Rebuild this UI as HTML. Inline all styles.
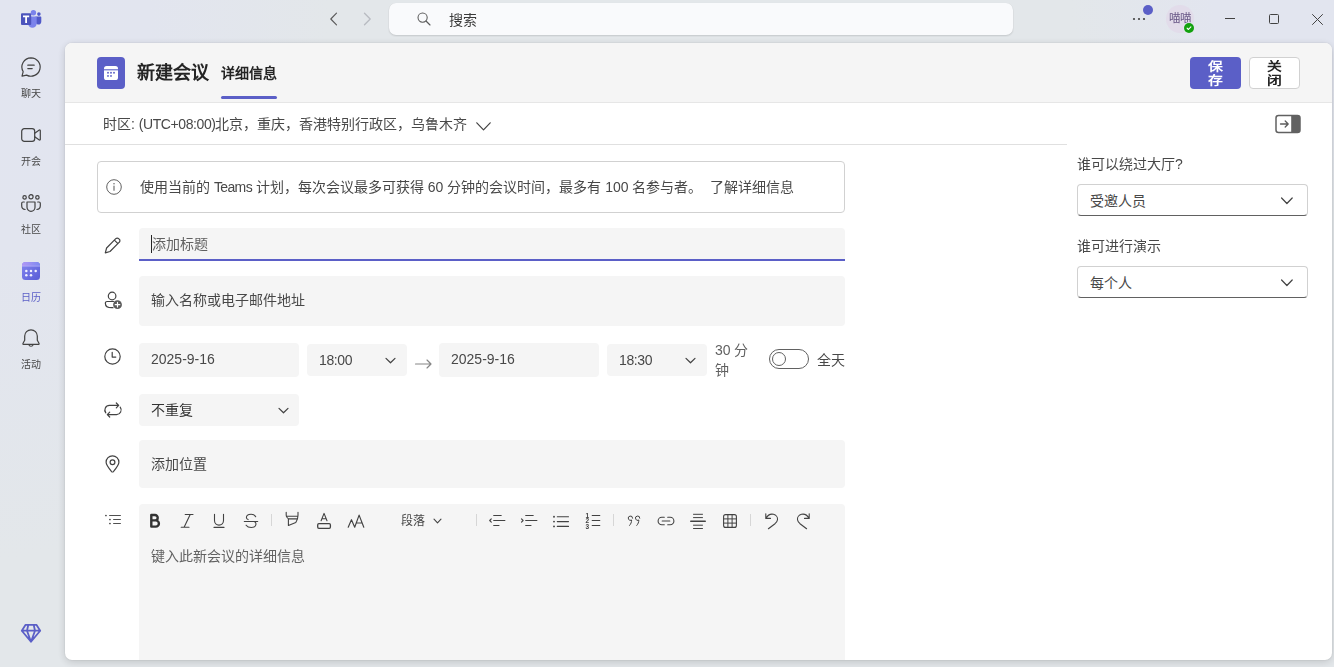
<!DOCTYPE html>
<html lang="zh-CN">
<head>
<meta charset="utf-8">
<title>新建会议</title>
<style>
*{box-sizing:border-box;margin:0;padding:0}
html,body{width:1334px;height:667px;overflow:hidden}
body{background:radial-gradient(ellipse 330px 560px at 0 0,#e2e5f0 0%,#e2e5ef 45%,rgba(226,229,239,0) 100%),radial-gradient(ellipse 240px 220px at 1310px 0,#e2e5ef 0%,#e2e5ef 40%,rgba(226,229,239,0) 100%),#e3e7ea;font-family:"Liberation Sans",sans-serif;font-size:14px;color:#484848;position:relative}
.abs{position:absolute}
.t{position:absolute;white-space:nowrap;line-height:20px;height:20px;text-align:justify;text-align-last:justify}
svg{position:absolute;overflow:visible}
.ic{fill:none;stroke:#424242;stroke-width:1.2;stroke-linecap:round;stroke-linejoin:round}
/* sidebar */
.nav{position:absolute;left:0;width:62px;text-align:center;font-size:10px;line-height:12px;height:12px;color:#484848}
/* panel */
#panel{position:absolute;left:65px;top:43px;width:1267px;height:617px;background:#fff;border-radius:7px;box-shadow:0 0 2px rgba(0,0,0,.12),0 2px 8px rgba(0,0,0,.16)}
#hdr{position:absolute;left:0;top:0;width:1267px;height:60px;background:#f5f5f5;border-radius:7px 7px 0 0;border-bottom:1px solid #e6e6e6}
.fld{position:absolute;background:#f5f5f5;border-radius:4px}
.dd{position:absolute;background:#fff;border:1px solid #d1d1d1;border-bottom-color:#616161;border-radius:4px}
.btn{font-weight:bold;font-size:14px;text-align:center}
.btn div{height:14px;line-height:14px;transform:scale(1.060,.87)}
</style>
</head>
<body>
<div id="root" style="position:absolute;left:0;top:0;width:1334px;height:667px;opacity:.999">

<!-- ===== title bar ===== -->
<div id="titlebar">
  <!-- Teams logo -->
  <svg style="left:21px;top:10px" width="21" height="19" viewBox="0 0 21 19">
    <circle cx="12.400" cy="2.700" r="2.700" fill="#7b83eb"/>
    <circle cx="17.900" cy="4.100" r="1.800" fill="#5059c9"/>
    <path d="M14.500 6.500h5.100a.7.700 0 0 1 .7.700v4.300a3.100 3.100 0 0 1-3.100 3.100h-.1a3.100 3.100 0 0 1-2.600-3.100z" fill="#5059c9"/>
    <path d="M7.700 6.500h7.200a.8.800 0 0 1 .8.800v6.200a4.300 4.300 0 0 1-8.600 0z" fill="#7b83eb"/>
    <rect x="0" y="3.300" width="10.200" height="11.600" rx="1" fill="#4b53bc"/>
    <path d="M2 5.500h6.200v1.700H6v5.900H4.200V7.200H2z" fill="#fff"/>
  </svg>
  <!-- back / forward -->
  <svg style="left:329px;top:12px" width="10" height="14" viewBox="0 0 10 14"><path d="M7.500 1.200L1.800 7l5.700 5.800" fill="none" stroke="#5a5a5a" stroke-width="1.150" stroke-linecap="round" stroke-linejoin="round"/></svg>
  <svg style="left:362px;top:12px" width="10" height="14" viewBox="0 0 10 14"><path d="M2.500 1.200L8.200 7l-5.700 5.800" fill="none" stroke="#b8bbc1" stroke-width="1.300" stroke-linecap="round" stroke-linejoin="round"/></svg>
  <!-- search box -->
  <div class="abs" style="left:389px;top:3px;width:624px;height:32px;border-radius:7px;background:#f9fafc;box-shadow:0 1px 2px rgba(0,0,0,.14),0 0 1px rgba(0,0,0,.10)"></div>
  <svg style="left:417px;top:12px" width="14" height="14" viewBox="0 0 14 14"><circle cx="5.600" cy="5.600" r="4.600" fill="none" stroke="#5a5a5a" stroke-width="1.050"/><path d="M9 9l4 4" stroke="#5a5a5a" stroke-width="1.150" stroke-linecap="round"/></svg>
  <div class="t" style="left:449px;top:10px;color:#3a3a3a;width:28.02px">搜索</div>
  <!-- more ... -->
  <svg style="left:1132px;top:17px" width="14" height="4" viewBox="0 0 14 4"><circle cx="2" cy="2" r="1.100" fill="#424242"/><circle cx="7" cy="2" r="1.100" fill="#424242"/><circle cx="12" cy="2" r="1.100" fill="#424242"/></svg>
  <div class="abs" style="left:1143px;top:5px;width:10px;height:10px;border-radius:50%;background:#5b5fc7"></div>
  <!-- avatar -->
  <div class="abs" style="left:1166px;top:5px;width:28px;height:28px;border-radius:50%;background:#e2dcea;color:#675585;font-size:11.500px;line-height:26px;text-align:center;letter-spacing:0">喵喵</div>
  <div class="abs" style="left:1183px;top:22px;width:12px;height:12px;border-radius:50%;background:#e3e7ed"></div>
  <svg style="left:1184px;top:23px" width="10" height="10" viewBox="0 0 10 10"><circle cx="5" cy="5" r="5" fill="#13a10e"/><path d="M3.100 5.200l1.300 1.300 2.500-2.700" fill="none" stroke="#fff" stroke-width="1.100" stroke-linecap="round" stroke-linejoin="round"/></svg>
  <!-- window controls -->
  <div class="abs" style="left:1225px;top:18px;width:10px;height:1px;background:#424242"></div>
  <div class="abs" style="left:1269px;top:14px;width:10px;height:10px;border:1px solid #424242;border-radius:1.500px"></div>
  <svg style="left:1312px;top:14px" width="11" height="11" viewBox="0 0 11 11"><path d="M.5.5l10 10M10.500.5l-10 10" stroke="#424242" stroke-width="1" stroke-linecap="round"/></svg>
</div>

<!-- ===== sidebar ===== -->
<div id="sidebar">
  <!-- chat -->
  <svg style="left:21px;top:57px" width="20" height="20" viewBox="0 0 20 20">
    <path class="ic" stroke="#262626" stroke-width="1.950" d="M10 .8a9.200 9.200 0 1 1-4.400 17.300L1 19.200l1.200-4.500A9.200 9.200 0 0 1 10 .8z"/>
    <path class="ic" stroke="#262626" stroke-width="1.950" d="M6.800 8.200h6.400M6.800 11.600h4.400"/>
  </svg>
  <div class="nav" style="top:88px">聊天</div>
  <!-- meet -->
  <svg style="left:21px;top:128px" width="20" height="14" viewBox="0 0 20 14">
    <rect class="ic" stroke="#262626" stroke-width="1.900" x=".7" y=".7" width="13" height="12.600" rx="2.600"/>
    <path class="ic" stroke="#262626" stroke-width="1.900" d="M13.700 5.200l4.600-3.100a.6.600 0 0 1 1 .5v8.800a.6.600 0 0 1-1 .5l-4.600-3.100"/>
  </svg>
  <div class="nav" style="top:156px">开会</div>
  <!-- communities -->
  <svg style="left:21px;top:194px" width="20" height="18" viewBox="0 0 20 18">
    <circle class="ic" stroke="#262626" stroke-width="1.750" cx="10" cy="2.800" r="2.100"/>
    <circle class="ic" stroke="#262626" stroke-width="1.750" cx="3.600" cy="3.400" r="1.700"/>
    <circle class="ic" stroke="#262626" stroke-width="1.750" cx="16.400" cy="3.400" r="1.700"/>
    <path class="ic" stroke="#262626" stroke-width="1.900" d="M6 8h8v5.300a4 4 0 0 1-8 0z"/>
    <path class="ic" stroke="#262626" stroke-width="1.900" d="M3.300 8H2a1.300 1.300 0 0 0-1.300 1.300v2.500a3.700 3.700 0 0 0 3.400 3.700M16.700 8H18a1.300 1.300 0 0 1 1.300 1.300v2.500a3.700 3.700 0 0 1-3.400 3.700"/>
  </svg>
  <div class="nav" style="top:224px">社区</div>
  <!-- calendar (active) -->
  <svg style="left:22px;top:262px" width="18" height="18" viewBox="0 0 18 18">
    <defs><linearGradient id="cg" x1="0" y1="0" x2="1" y2="1"><stop offset="0" stop-color="#8486f0"/><stop offset="1" stop-color="#585cd6"/></linearGradient><linearGradient id="cg2" x1="0" y1="0" x2="1" y2="0"><stop offset="0" stop-color="#b198f5"/><stop offset="1" stop-color="#7f8af0"/></linearGradient></defs>
    <rect x="0" y="0" width="18" height="18" rx="3.500" fill="url(#cg)"/>
    <path d="M0 4V3.500A3.500 3.500 0 0 1 3.500 0h11A3.500 3.500 0 0 1 18 3.500V4z" fill="url(#cg2)"/>
    <path d="M0 4.200h18" stroke="#c4c0fa" stroke-width=".6"/>
    <g fill="#f0f0ff"><circle cx="4.300" cy="9" r="1.250"/><circle cx="9" cy="9" r="1.250"/><circle cx="13.700" cy="9" r="1.250"/><circle cx="4.300" cy="13.300" r="1.250"/><circle cx="9" cy="13.300" r="1.250"/></g>
  </svg>
  <div class="nav" style="top:292px;color:#5b5fc7">日历</div>
  <!-- activity -->
  <svg style="left:22px;top:329px" width="18" height="20" viewBox="0 0 18 20">
    <path class="ic" stroke="#262626" stroke-width="1.900" d="M9 .8a6.300 6.300 0 0 1 6.300 6.300v4.200l1.800 3.200a.5.500 0 0 1-.4.800H1.300a.5.500 0 0 1-.4-.8l1.800-3.200V7.100A6.300 6.300 0 0 1 9 .8z"/>
    <path class="ic" stroke="#262626" stroke-width="1.900" d="M6.800 15.600a2.300 2.300 0 0 0 4.400 0"/>
  </svg>
  <div class="nav" style="top:359px">活动</div>
  <!-- premium diamond -->
  <svg style="left:21px;top:624px" width="20" height="19" viewBox="0 0 20 19">
    <path d="M4.600.8h10.800l3.800 5.900L10 17.800.8 6.700z M.8 6.700h18.400 M7.300.8L6 6.700l4 11.100 4-11.100L12.700.8" fill="none" stroke="#5b5fc7" stroke-width="1.800" stroke-linejoin="round" stroke-linecap="round"/>
  </svg>
</div>

<!-- ===== main panel ===== -->
<div id="panel">
  <div id="hdr"></div>
</div>

<!-- ===== content (absolute, page coords) ===== -->
<div id="content">
  <!-- header: icon, title, tab, buttons -->
  <div class="abs" style="left:97px;top:57px;width:28px;height:32px;border-radius:4px;background:#5b5fc7"></div>
  <svg style="left:104px;top:66px" width="14" height="14" viewBox="0 0 14 14">
    <rect x="0" y="0" width="14" height="14" rx="2.600" fill="#fff"/>
    <rect x="1.300" y="3.600" width="11.400" height="9.100" rx="1.500" fill="#5b5fc7" opacity="0"/>
    <path d="M0 3.800h14" stroke="#5b5fc7" stroke-width="1.100"/>
    <g fill="#5b5fc7"><circle cx="4" cy="6.800" r=".95"/><circle cx="7" cy="6.800" r=".95"/><circle cx="10" cy="6.800" r=".95"/><circle cx="4" cy="9.900" r=".95"/><circle cx="7" cy="9.900" r=".95"/></g>
  </svg>
  <div class="t" style="left:137px;top:61px;height:24px;line-height:24px;font-size:18px;font-weight:bold;color:#242424;width:72.02px">新建会议</div>
  <div class="t" style="left:221px;top:63px;font-size:14px;font-weight:bold;color:#242424;width:56.02px">详细信息</div>
  <div class="abs" style="left:221px;top:96px;width:56px;height:3px;border-radius:1.500px;background:#5b5fc7"></div>
  <div class="abs btn" style="left:1190px;top:57px;width:51px;height:32px;border-radius:4px;background:#5b5fc7;color:#fff;padding-top:2.600px"><div>保</div><div>存</div></div>
  <div class="abs btn" style="left:1249px;top:57px;width:51px;height:32px;border-radius:4px;background:#fff;border:1px solid #d1d1d1;color:#242424;padding-top:1.600px"><div>关</div><div>闭</div></div>

  <!-- timezone row -->
  <div class="t" style="left:103px;top:114px;color:#484848;width:364.49px">时区: <span style="letter-spacing:-.42px">(UTC+08:00)</span>北京，重庆，香港特别行政区，乌鲁木齐</div>
  <svg style="left:476px;top:121.700px" width="15" height="9" viewBox="0 0 15 9"><path class="ic" stroke="#555" stroke-width="1.050" d="M.8.8L7.500 7.800 14.200.8"/></svg>
  <svg style="left:1275px;top:114px" width="26" height="20" viewBox="0 0 26 20">
    <rect x="1" y="1.500" width="24" height="17" rx="2.500" fill="#fff" stroke="#616161" stroke-width="1.500"/>
    <path d="M16.200 1.500h6.300A2.500 2.500 0 0 1 25 4v12a2.500 2.500 0 0 1-2.500 2.500H16.200z" fill="#616161"/>
    <path d="M5.500 10h7.500M10.200 7l3 3-3 3" fill="none" stroke="#5c5c5c" stroke-width="1.300" stroke-linecap="round" stroke-linejoin="round"/>
  </svg>
  <div class="abs" style="left:65px;top:144px;width:1002px;height:1px;background:#e0e0e0"></div>

  <!-- info banner -->
  <div class="abs" style="left:97px;top:161px;width:748px;height:52px;border:1px solid #d1d1d1;border-radius:4px;background:#fff"></div>
  <svg style="left:106px;top:179px" width="16" height="16" viewBox="0 0 16 16"><circle cx="8" cy="8" r="7.300" fill="none" stroke="#616161" stroke-width="1"/><path d="M8 7v4.300" stroke="#616161" stroke-width="1.100" stroke-linecap="round"/><circle cx="8" cy="4.700" r=".75" fill="#616161"/></svg>
  <div class="t" style="left:140px;top:177px;color:#484848;width:654.22px">使用当前的 <span style="letter-spacing:-.62px">Teams</span> 计划，每次会议最多可获得 60 分钟的会议时间，最多有 100 名参与者。&nbsp; 了解详细信息</div>

  <!-- title input -->
  <svg style="left:104px;top:236.500px" width="17" height="17" viewBox="0 0 17 17"><path class="ic" stroke="#616161" stroke-width="1.100" d="M11.800 1.700a2 2 0 0 1 2.900 0l.6.600a2 2 0 0 1 0 2.900L6 14.500l-4.700 1.300L2.600 11z M10.400 3.100l3.500 3.500"/></svg>
  <div class="fld" style="left:139px;top:228px;width:706px;height:33px;border-radius:4px 4px 0 0;border-bottom:2px solid #5b5fc7"></div>
  <div class="abs" style="left:151px;top:235px;width:1px;height:18px;background:#242424"></div>
  <div class="t" style="left:151.500px;top:234px;color:#616161;width:56.02px">添加标题</div>

  <!-- attendees -->
  <svg style="left:105px;top:291px" width="18" height="18" viewBox="0 0 18 18">
    <circle class="ic" stroke="#616161" stroke-width="1.100" cx="7.100" cy="5" r="3.800"/>
    <path class="ic" stroke="#616161" stroke-width="1.100" d="M8.600 10.500H2a1.600 1.600 0 0 0-1.600 1.600v.3c0 2.300 2.100 4.300 6.300 4.300h1.300"/>
    <circle cx="12.500" cy="13.700" r="4.400" fill="#5a5a5a"/>
    <path d="M12.500 11.400v4.600M10.200 13.700h4.600" stroke="#fff" stroke-width="1.200" stroke-linecap="round"/>
  </svg>
  <div class="fld" style="left:139px;top:276px;width:706px;height:50px"></div>
  <div class="t" style="left:151px;top:290px;color:#484848;width:154.02px">输入名称或电子邮件地址</div>

  <!-- date / time row -->
  <svg style="left:104px;top:347.500px" width="17" height="17" viewBox="0 0 17 17"><circle class="ic" stroke="#616161" stroke-width="1.100" cx="8.500" cy="8.500" r="7.700"/><path class="ic" stroke="#616161" stroke-width="1.100" d="M8.200 4.300v4.800h3.600"/></svg>
  <div class="fld" style="left:139px;top:343px;width:160px;height:34px"></div>
  <div class="t" style="left:151px;top:349px;color:#484848;width:63.85px">2025-9-16</div>
  <div class="fld" style="left:307px;top:344px;width:100px;height:32px"></div>
  <div class="t" style="left:319px;top:350px;letter-spacing:-.4px;color:#484848;width:33.07px">18:00</div>
  <svg style="left:385px;top:357px" width="11" height="7" viewBox="0 0 11 7"><path class="ic" stroke-width="1.300" d="M1 1.400L5.500 5.800 10 1.400"/></svg>
  <svg style="left:415px;top:359px" width="17" height="10" viewBox="0 0 17 10"><path d="M.5 5h15.500M12 1l4 4-4 4" fill="none" stroke="#868686" stroke-width="1.150" stroke-linecap="round" stroke-linejoin="round"/></svg>
  <div class="fld" style="left:439px;top:343px;width:160px;height:34px"></div>
  <div class="t" style="left:451px;top:349px;color:#484848;width:63.85px">2025-9-16</div>
  <div class="fld" style="left:607px;top:344px;width:100px;height:32px"></div>
  <div class="t" style="left:619px;top:350px;letter-spacing:-.4px;color:#484848;width:33.07px">18:30</div>
  <svg style="left:685px;top:357px" width="11" height="7" viewBox="0 0 11 7"><path class="ic" stroke-width="1.300" d="M1 1.400L5.500 5.800 10 1.400"/></svg>
  <div class="t" style="left:715px;top:340px;height:40px;color:#616161;white-space:normal;width:36px;text-align:left;text-align-last:left">30 分<br>钟</div>
  <div class="abs" style="left:769px;top:349px;width:40px;height:20px;border:1px solid #616161;border-radius:10px;background:#fff"></div>
  <div class="abs" style="left:772px;top:352px;width:14px;height:14px;border:1px solid #616161;border-radius:50%;background:#fff"></div>
  <div class="t" style="left:817px;top:350px;color:#484848;width:28.02px">全天</div>

  <!-- recurrence -->
  <svg style="left:104px;top:402px" width="18" height="16" viewBox="0 0 18 16">
    <path class="ic" stroke="#616161" stroke-width="1.100" d="M12.300 1l2.400 2.400-2.400 2.400M14.400 3.400H5.500a4.600 4.600 0 0 0-3.700 7.400M5.700 15l-2.400-2.400 2.400-2.400M3.600 12.600h8.900a4.600 4.600 0 0 0 3.700-7.400"/>
  </svg>
  <div class="fld" style="left:139px;top:394px;width:160px;height:32px"></div>
  <div class="t" style="left:151px;top:400px;color:#333;width:42.02px">不重复</div>
  <svg style="left:278px;top:407px" width="11" height="7" viewBox="0 0 11 7"><path class="ic" stroke-width="1.300" d="M1 1.400L5.500 5.800 10 1.400"/></svg>

  <!-- location -->
  <svg style="left:105px;top:455px" width="15" height="18" viewBox="0 0 15 18">
    <path class="ic" stroke="#616161" stroke-width="1.100" d="M7.500.8a6.400 6.400 0 0 1 6.400 6.400c0 2.400-1.500 4.500-5.500 9.400a1.200 1.200 0 0 1-1.800 0C2.600 11.700 1.100 9.600 1.100 7.200A6.400 6.400 0 0 1 7.500.8z"/>
    <circle class="ic" stroke="#616161" stroke-width="1.100" cx="7.500" cy="7.300" r="2.400"/>
  </svg>
  <div class="fld" style="left:139px;top:440px;width:706px;height:48px"></div>
  <div class="t" style="left:151px;top:454px;color:#484848;width:56.02px">添加位置</div>

  <!-- editor -->
  <svg style="left:0;top:0" width="1334" height="667" viewBox="0 0 1334 667" fill="#505050">
    <rect x="109" y="515" width="12" height="1" rx=".4"/><circle cx="105.950" cy="515.500" r=".85" fill="#3c3c3c"/>
    <rect x="113" y="519" width="8" height="1" rx=".4"/><circle cx="109.950" cy="519.500" r=".85" fill="#3c3c3c"/>
    <rect x="113" y="523" width="8" height="1" rx=".4"/><circle cx="109.950" cy="523.500" r=".85" fill="#3c3c3c"/>
  </svg>
  <div class="fld" style="left:139px;top:504px;width:706px;height:156px;border-radius:4px 4px 0 0"></div>
  <div class="t" style="left:151px;top:546px;color:#616161;width:154.02px">键入此新会议的详细信息</div>
  <!-- toolbar -->
  <svg id="tb" style="left:0;top:0" width="1334" height="667" viewBox="0 0 1334 667" fill="none" stroke="#424242" stroke-width="1.100" stroke-linecap="round" stroke-linejoin="round">
    <!-- bold -->
    <path d="M151.300 515h3.700a2.600 2.600 0 0 1 0 5.400h-3.700zM151.300 520.400h4.500a3.100 3.100 0 0 1 0 6.200h-4.500z" stroke="#333" stroke-width="2.400"/>
    <!-- italic -->
    <path d="M185.200 514.500h7.800M181.200 527.300h7.800M190.200 514.500l-6.100 12.800"/>
    <!-- underline -->
    <path d="M214.500 514.200v6.400a4.500 4.500 0 0 0 9 0v-6.400M214 527.400h10"/>
    <!-- strikethrough -->
    <path d="M255.700 516.700c-.9-1.600-2.500-2.500-4.600-2.500-2.800 0-4.700 1.500-4.700 3.300 0 1 .6 1.700 1.700 2.100M244.300 521.500h13.400M254.700 521.700c.9.600 1.300 1.400 1.300 2.400 0 2-2 3.400-4.700 3.400-2.400 0-4.200-.9-5.200-2.300"/>
    <!-- highlighter -->
    <path d="M286.200 512.200v3c0 1.600.8 2.700 2.200 3.700v6.600l7.400-3c1.600-2.400 2.200-4.500 2.200-7.300v-3M286.400 516.200h11.400M288.400 518.900h8.300"/>
    <!-- font colour -->
    <path d="M321.100 520.700l2.950-7.300 2.950 7.300M322.100 518.800h3.900"/>
    <rect x="317.700" y="523.700" width="12.700" height="4.600" rx="1.200" stroke-width="1.300"/>
    <!-- font size -->
    <path d="M348.200 527.200l3.250-7.500 3.250 7.500 4.400-12.100 4.700 12.100M357 523h4.300" stroke-width="1.150"/>
    <!-- paragraph chevron -->
    <path d="M434 519.200l3.500 3.600 3.500-3.600"/>
    <!-- outdent -->
    <path d="M493.700 515.500h7.500M493.700 520.500h11.200M493.700 525.500h5.300M491.300 518.800l-1.600 1.700 1.600 1.700"/>
    <!-- indent -->
    <path d="M525.700 515.500h7.500M525.700 520.500h11.200M525.700 525.500h5.300M521.500 518.800l1.600 1.700-1.600 1.700"/>
    <!-- bullets -->
    <path d="M557.300 516.800h11.200M557.300 521.600h11.200M557.300 526.400h11.200"/>
    <g fill="#424242" stroke="none"><circle cx="554" cy="516.800" r=".95"/><circle cx="554" cy="521.600" r=".95"/><circle cx="554" cy="526.400" r=".95"/></g>
    <!-- numbered -->
    <path d="M592.200 515.500h7.600M592.200 520.500h7.600M592.200 525.500h7.600"/>
    <!-- quote -->
    <path d="M632.600 518.200a2.150 2.150 0 1 0-1 1.800c0 2.200-.7 3.900-2 5.400M639.800 518.200a2.150 2.150 0 1 0-1 1.800c0 2.200-.7 3.900-2 5.400" stroke-width="1"/>
    <!-- link -->
    <path d="M664.300 517.300h-2.500a3.700 3.700 0 0 0 0 7.400h2.500M667.700 517.300h2.500a3.700 3.700 0 0 1 0 7.400h-2.500M662.200 521h7.600"/>
    <!-- horizontal rule -->
    <path d="M693.500 514.300h9M693.500 517.600h9M693.500 525.200h9M693.500 528.500h9" stroke-width="1"/>
    <path d="M690.800 521.300h14.400" stroke-width="1.600"/>
    <!-- table -->
    <rect x="723.600" y="514.600" width="12.800" height="12.800" rx="2"/>
    <path d="M723.600 518.900h12.800M723.600 523.100h12.800M727.900 514.600v12.800M732.100 514.600v12.800" stroke-width="1"/>
    <!-- undo -->
    <path d="M765.800 513.700v4.700h4.700M766 518.200c1.600-2.800 4.400-4.600 7.500-3.900 2.500.6 4.300 3 4 5.400-.2 1.600-1.200 2.800-2.500 4l-6.600 5"/>
    <!-- redo -->
    <path d="M809.200 513.700v4.700h-4.700M809 518.200c-1.600-2.800-4.400-4.600-7.500-3.900-2.500.6-4.300 3-4 5.400.2 1.600 1.200 2.800 2.500 4l6.600 5"/>
    <g font-family="Liberation Sans,sans-serif" font-size="6.500" font-weight="bold" fill="#424242" stroke="none"><text x="585.600" y="518.200">1</text><text x="585.600" y="523.400">2</text><text x="585.600" y="528.600">3</text></g>
  </svg>
  <div class="abs" style="left:271px;top:514px;width:1px;height:12px;background:#d6d6d6"></div>
  <div class="abs" style="left:476px;top:514px;width:1px;height:12px;background:#d6d6d6"></div>
  <div class="abs" style="left:613px;top:514px;width:1px;height:12px;background:#d6d6d6"></div>
  <div class="abs" style="left:750px;top:514px;width:1px;height:12px;background:#d6d6d6"></div>
  <div class="t" style="left:401px;top:511px;font-size:12px;color:#484848;width:24.02px">段落</div>

  <!-- right options -->
  <div class="t" style="left:1077px;top:154px;color:#484848;width:105.82px">谁可以绕过大厅?</div>
  <div class="dd" style="left:1077px;top:184px;width:231px;height:32px"></div>
  <div class="t" style="left:1090px;top:190.500px;color:#484848;width:56.02px">受邀人员</div>
  <svg style="left:1280px;top:197px" width="13" height="8" viewBox="0 0 13 8"><path class="ic" stroke="#686868" stroke-width="1.200" d="M1.600 1L6.900 6.500 12.200 1"/></svg>
  <div class="t" style="left:1077px;top:236px;color:#484848;width:84.02px">谁可进行演示</div>
  <div class="dd" style="left:1077px;top:266px;width:231px;height:32px"></div>
  <div class="t" style="left:1090px;top:272.500px;color:#484848;width:42.02px">每个人</div>
  <svg style="left:1280px;top:279px" width="13" height="8" viewBox="0 0 13 8"><path class="ic" stroke="#686868" stroke-width="1.200" d="M1.600 1L6.900 6.500 12.200 1"/></svg>
</div>

</div>
</body>
</html>
